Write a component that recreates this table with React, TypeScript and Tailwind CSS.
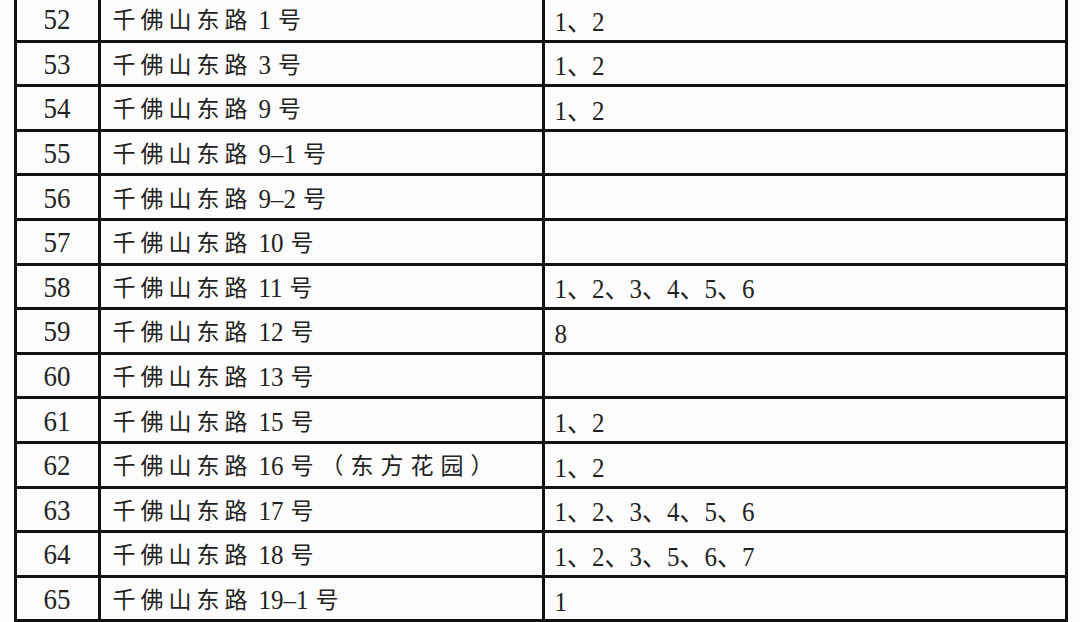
type Row = {
  no: number;
  road: string;
  num: string;
  extra?: string;
  units: string;
};

const rows: Row[] = [
  { no: 52, road: "千佛山东路", num: "1", units: "1、2" },
  { no: 53, road: "千佛山东路", num: "3", units: "1、2" },
  { no: 54, road: "千佛山东路", num: "9", units: "1、2" },
  { no: 55, road: "千佛山东路", num: "9–1", units: "" },
  { no: 56, road: "千佛山东路", num: "9–2", units: "" },
  { no: 57, road: "千佛山东路", num: "10", units: "" },
  { no: 58, road: "千佛山东路", num: "11", units: "1、2、3、4、5、6" },
  { no: 59, road: "千佛山东路", num: "12", units: "8" },
  { no: 60, road: "千佛山东路", num: "13", units: "" },
  { no: 61, road: "千佛山东路", num: "15", units: "1、2" },
  { no: 62, road: "千佛山东路", num: "16", extra: "（东方花园）", units: "1、2" },
  { no: 63, road: "千佛山东路", num: "17", units: "1、2、3、4、5、6" },
  { no: 64, road: "千佛山东路", num: "18", units: "1、2、3、5、6、7" },
  { no: 65, road: "千佛山东路", num: "19–1", units: "1" },
];

const serif = "font-['Liberation_Serif','Noto_Sans_CJK_SC',serif]";
const cjk = "font-['Noto_Sans_CJK_SC','Liberation_Serif',sans-serif]";

export default function App() {
  return (
    <div className="h-[622px] w-[1080px] overflow-hidden bg-[#fcfcfc] text-[#222]">
      <table className="-mt-[5px] ml-[13.5px] w-[1054px] table-fixed border-collapse">
        <colgroup>
          <col className="w-[84px]" />
          <col className="w-[444px]" />
          <col className="w-[523px]" />
        </colgroup>
        <tbody>
          {rows.map((row) => (
            <tr key={row.no} className="h-[44.6px]">
              <td className={`border-[3px] border-[#111] p-0 pt-[2px] text-center align-middle text-[27px] leading-none ${serif}`}>
                <span className="inline-block scale-y-110">{row.no}</span>
              </td>
              <td className="border-[3px] border-[#111] py-0 pt-[2px] pl-[12px] align-middle whitespace-nowrap leading-none">
                <span className={`${cjk} text-[23px] tracking-[5px]`}>{row.road}</span>
                <span className={`${serif} ml-[6px] mr-[7px] inline-block scale-y-110 text-[25px]`}>{row.num}</span>
                <span className={`${cjk} text-[23px] tracking-[7px]`}>
                  号{row.extra}
                </span>
              </td>
              <td className={`border-[3px] border-[#111] py-0 pl-[10px] pt-[5px] align-middle text-[25px] leading-none whitespace-nowrap ${serif}`}>
                <span className="inline-block scale-y-110">{row.units}</span>
              </td>
            </tr>
          ))}
        </tbody>
      </table>
    </div>
  );
}
